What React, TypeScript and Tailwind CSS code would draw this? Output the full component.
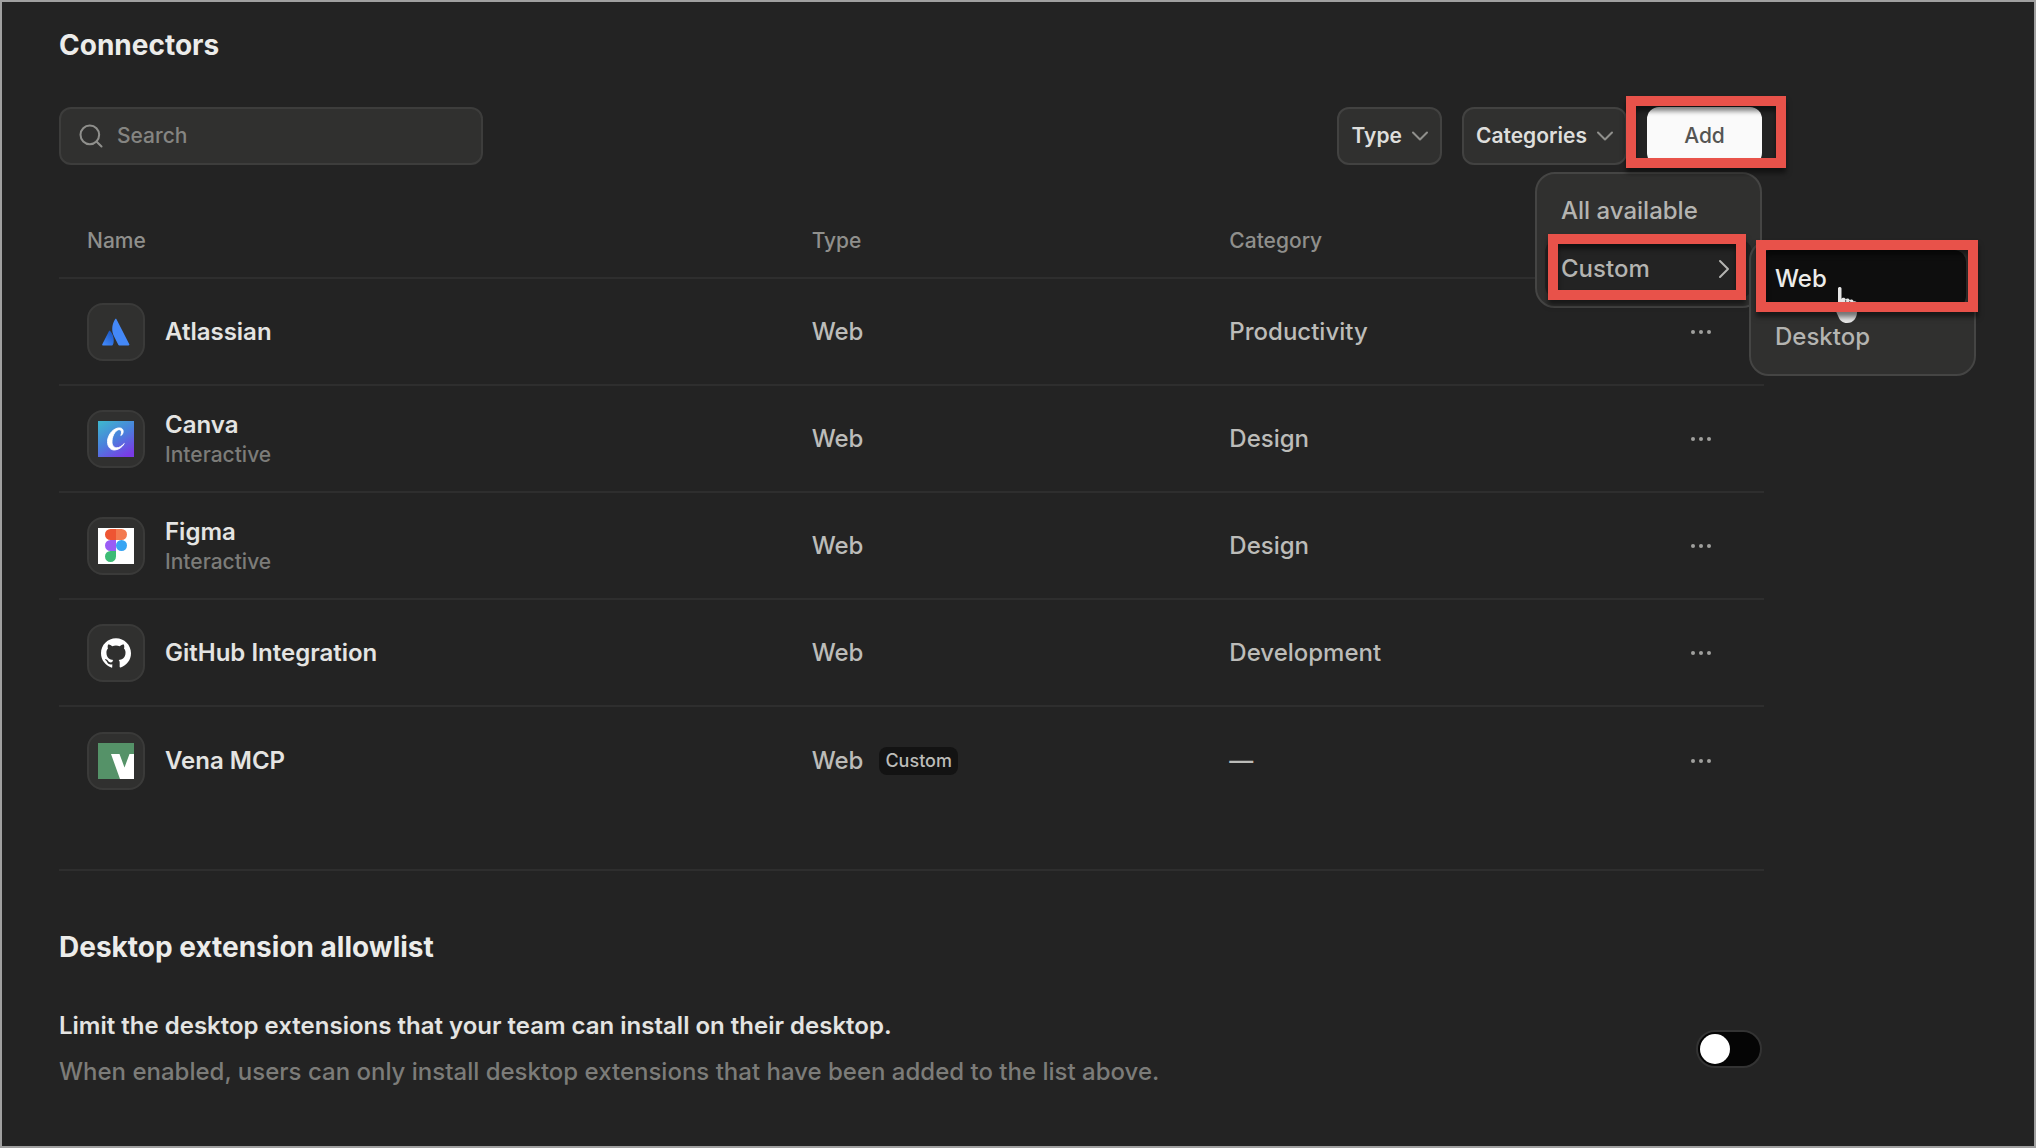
import { ChevronDown, ChevronRight, Search } from "lucide-react";
import { SiGithub } from "react-icons/si";
import type { ReactNode } from "react";

function AtlassianLogo() {
  return (
    <svg viewBox="0 0 28 28" className="size-7" aria-hidden="true">
      <defs>
        <linearGradient id="atl" x1="0.9" y1="0.1" x2="0.3" y2="1">
          <stop offset="0" stopColor="#1a56c4" />
          <stop offset="1" stopColor="#3f86f7" />
        </linearGradient>
      </defs>
      <path d="M8.2 13.1c-.4-.5-1-.4-1.3.1L.2 26.4c-.3.6.1 1.1.7 1.1h9.1c.4 0 .7-.2.8-.5 2-4.1.8-10.3-2.6-13.9z" fill="url(#atl)" />
      <path d="M13.1 1.3c-3.7 5.9-3.5 12.4-1 17.2l4.3 8.5c.2.3.5.5.8.5h9.3c.7 0 1.1-.6.8-1.2L14.5 1.3c-.3-.6-1.1-.6-1.4 0z" fill="#4488f7" />
    </svg>
  );
}

function CanvaLogo() {
  return (
    <svg viewBox="0 0 36 36" className="size-9" aria-hidden="true">
      <defs>
        <linearGradient id="cnv" x1="0.15" y1="0" x2="0.75" y2="1">
          <stop offset="0" stopColor="#3fb3cf" />
          <stop offset="0.5" stopColor="#4a80dc" />
          <stop offset="1" stopColor="#7a3be6" />
        </linearGradient>
      </defs>
      <rect width="36" height="36" fill="url(#cnv)" />
      <path
        d="M22.8 14.5c2.7-1 3.8-6.8-.5-7.5-6.2-1-12.8 6.5-12.8 13.6 0 5.2 3 8.6 7.2 8.4 3.9-.2 7.6-3 9.6-6.5-2.5 2.7-5.3 4.4-7.6 4.3-3.3-.2-4.9-2.9-4.7-6.9.3-6 4.3-12 7.9-11.2 2.1.6 1.9 3.5.9 5.8z"
        fill="#ffffff"
        stroke="#ffffff"
        strokeWidth="0.9"
        strokeLinejoin="round"
      />
    </svg>
  );
}

function FigmaLogo() {
  return (
    <svg viewBox="0 0 36 36" className="size-9" aria-hidden="true">
      <rect width="36" height="36" fill="#ffffff" />
      <path d="M12.5 1H18v11h-5.5a5.5 5.5 0 0 1 0-11z" fill="#ee5533" />
      <path d="M18 1h5.5a5.5 5.5 0 0 1 0 11H18z" fill="#f37a50" />
      <path d="M12.5 12H18v11h-5.5a5.5 5.5 0 0 1 0-11z" fill="#9a5cf5" />
      <circle cx="23.5" cy="17.5" r="5.5" fill="#38a5f3" />
      <path d="M12.5 23H18v5.5a5.5 5.5 0 1 1-5.5-5.5z" fill="#3dbb75" />
    </svg>
  );
}

function VenaLogo() {
  return (
    <svg viewBox="0 0 36 36" className="size-9" aria-hidden="true">
      <rect width="36" height="36" fill="#559268" />
      <path d="M13 11h8.5l5 13.5L31.5 11H36v25H22z" fill="#ffffff" />
    </svg>
  );
}

type Connector = {
  name: string;
  note?: string;
  category: string;
  custom?: boolean;
  logo: ReactNode;
};

const connectors: Connector[] = [
  { name: "Atlassian", category: "Productivity", logo: <AtlassianLogo /> },
  { name: "Canva", note: "Interactive", category: "Design", logo: <CanvaLogo /> },
  { name: "Figma", note: "Interactive", category: "Design", logo: <FigmaLogo /> },
  { name: "GitHub Integration", category: "Development", logo: <SiGithub className="size-[30px] text-white" /> },
  { name: "Vena MCP", category: "—", custom: true, logo: <VenaLogo /> },
];

function Callout({ className }: { className: string }) {
  return (
    <span
      aria-hidden="true"
      className={`pointer-events-none absolute z-30 border-10 border-[#e8524a] shadow-[0_5px_5px_rgba(0,0,0,0.5),inset_0_5px_5px_rgba(0,0,0,0.5)] ${className}`}
    />
  );
}

function HandCursor() {
  return (
    <svg viewBox="0 0 26 38" className="pointer-events-none absolute top-11 left-[82px] z-20 h-[38px] w-[26px]" aria-hidden="true">
      <path
        d="M5 2.5C5 .5 8.5.5 8.5 2.5V13c.5-1.8 4-1.6 4.2.5.7-1.5 3.8-1.2 4 .8.9-1.3 3.6-.8 3.8 1.2 1-.8 3.500-.4 3.500 2V26c0 6-3.500 11-10 11-4.500 0-7-2.500-8.500-6L1.500 22c-.8-2 1.500-3.500 3.500-1z"
        fill="#e6e6e6"
      />
      <path d="M12.7 14v6M16.7 15v5M20.5 16.5V20" stroke="#555555" strokeWidth="1" />
    </svg>
  );
}

function FilterButton({ children }: { children: string }) {
  return (
    <button
      type="button"
      aria-haspopup="listbox"
      className="flex h-[58px] items-center gap-1 rounded-xl border-2 border-[#424241] bg-[#30302f] pr-1.5 pl-3 text-[21px] font-semibold text-[#dededc]"
    >
      {children}
      <ChevronDown className="size-7 text-[#8f8f8c]" strokeWidth={1.75} aria-hidden="true" />
    </button>
  );
}

function AddMenu() {
  return (
    <div
      role="menu"
      aria-label="Add connector"
      className="absolute top-full right-0 z-10 mt-[7px] w-[227px] rounded-[20px] border-2 border-[#454544] bg-[#30302f] p-2 text-2xl font-medium text-[#b4b4b1]"
    >
      <button type="button" role="menuitem" className="flex h-[58px] w-full items-center rounded-xl px-4">
        All available
      </button>
      <div className="relative">
        <button
          type="button"
          role="menuitem"
          aria-haspopup="menu"
          aria-expanded="true"
          className="flex h-[58px] w-full items-center justify-between rounded-xl bg-[#232323] pr-3 pl-4"
        >
          Custom
          <ChevronRight className="size-8" strokeWidth={1.5} aria-hidden="true" />
        </button>
        <Callout className="right-1.5 left-[3px] -top-1.5 h-[66px]" />
        <div
          role="menu"
          aria-label="Custom"
          className="absolute top-0 left-full z-10 -ml-[3px] w-[227px] rounded-[20px] border-2 border-[#454544] bg-[#30302f] p-2"
        >
          <button type="button" role="menuitem" className="flex h-[58px] w-full items-center rounded-xl bg-[#0e0e0e] px-4 text-[#ececea]">
            Web
          </button>
          <button type="button" role="menuitem" className="flex h-[58px] w-full items-center rounded-xl px-4">
            Desktop
          </button>
          <HandCursor />
          <Callout className="-right-1 left-[5px] -top-0.5 h-[72px]" />
        </div>
      </div>
    </div>
  );
}

export default function App() {
  return (
    <main className="min-h-screen overflow-x-hidden border-2 border-[#a0a0a0] bg-[#232323] pt-[27px] pr-[270px] pb-12 pl-[57px] font-['Inter','Liberation_Sans',sans-serif] text-2xl text-[#bcbcb9]">
      <h1 className="text-[28px] leading-8 font-bold text-[#ececea]">Connectors</h1>

      <div className="mt-[46px] mr-0.5 flex items-center justify-between">
        <label className="flex h-[58px] w-[424px] items-center gap-3 rounded-xl border-2 border-[#3d3d3c] bg-[#30302f] px-4">
          <Search className="size-7 shrink-0 text-[#8f8f8c]" strokeWidth={1.75} aria-hidden="true" />
          <input
            type="search"
            aria-label="Search connectors"
            placeholder="Search"
            className="min-w-0 flex-1 bg-transparent text-[21px] font-medium outline-none placeholder:text-[#858582]"
          />
        </label>
        <div className="flex gap-5">
          <FilterButton>Type</FilterButton>
          <FilterButton>Categories</FilterButton>
          <div className="relative">
            <button type="button" aria-haspopup="menu" aria-expanded="true" className="h-[58px] w-[115px] rounded-xl bg-[#fafafa] text-[21px] font-medium text-[#555553]">
              Add
            </button>
            <Callout className="-right-6 -left-[21px] -top-[11px] h-[72px]" />
            <AddMenu />
          </div>
        </div>
      </div>

      <table className="mt-[39px] w-full table-fixed border-separate border-spacing-0 text-left">
        <colgroup>
          <col className="w-[42.5%]" />
          <col className="w-[24.5%]" />
          <col />
          <col className="w-[126px]" />
        </colgroup>
        <thead>
          <tr className="h-[75px] text-[21px] text-[#8f8f8c]">
            <th className="border-b-2 border-[#2e2e2e] px-7 font-medium">Name</th>
            <th className="border-b-2 border-[#2e2e2e] px-7 font-medium">Type</th>
            <th className="border-b-2 border-[#2e2e2e] px-7 font-medium">Category</th>
            <th className="border-b-2 border-[#2e2e2e]" aria-label="Actions" />
          </tr>
        </thead>
        <tbody className="font-medium [&>tr:not(:last-child)>td]:border-b-2">
          {connectors.map((c) => (
            <tr key={c.name} className="h-[107px]">
              <td className="border-[#2e2e2e] px-7">
                <div className="flex items-center gap-5">
                  <span className="flex size-[58px] shrink-0 items-center justify-center rounded-2xl border-2 border-[#3a3a39] bg-[#30302f]">
                    {c.logo}
                  </span>
                  <span className="flex flex-col">
                    <span className="leading-8 font-semibold text-[#e4e4e2]">{c.name}</span>
                    {c.note && <span className="text-[21px] leading-7 text-[#7c7c79]">{c.note}</span>}
                  </span>
                </div>
              </td>
              <td className="border-[#2e2e2e] px-7">
                <span className="flex items-center gap-4">
                  Web
                  {c.custom && (
                    <span className="rounded-lg bg-[#131313] px-1.5 text-lg leading-7">Custom</span>
                  )}
                </span>
              </td>
              <td className="border-[#2e2e2e] px-7">{c.category}</td>
              <td className="border-[#2e2e2e]">
                <button type="button" aria-label={`Options for ${c.name}`} className="mx-auto flex size-8 items-center justify-center gap-1">
                  <span className="size-1 rounded-full bg-[#a0a09d]" />
                  <span className="size-1 rounded-full bg-[#a0a09d]" />
                  <span className="size-1 rounded-full bg-[#a0a09d]" />
                </button>
              </td>
            </tr>
          ))}
        </tbody>
      </table>

      <section className="mt-[55px] border-t-2 border-[#2e2e2e] pt-[60px]">
        <h2 className="text-[28px] leading-8 font-bold text-[#ececea]">Desktop extension allowlist</h2>
        <div className="mt-[45px] mr-0.5 flex items-center justify-between">
          <div className="flex flex-col gap-2.5 leading-9">
            <label htmlFor="allowlist" className="font-semibold text-[#e4e4e2]">
              Limit the desktop extensions that your team can install on their desktop.
            </label>
            <p id="allowlist-help" className="font-medium text-[#7c7c79]">
              When enabled, users can only install desktop extensions that have been added to the list above.
            </p>
          </div>
          <input
            id="allowlist"
            type="checkbox"
            role="switch"
            aria-describedby="allowlist-help"
            className="h-[38px] w-[66px] shrink-0 appearance-none rounded-full border-2 border-[#333333] bg-[#050505] p-0.5 before:block before:size-[30px] before:rounded-full before:bg-white checked:before:ml-7"
          />
        </div>
      </section>
    </main>
  );
}
